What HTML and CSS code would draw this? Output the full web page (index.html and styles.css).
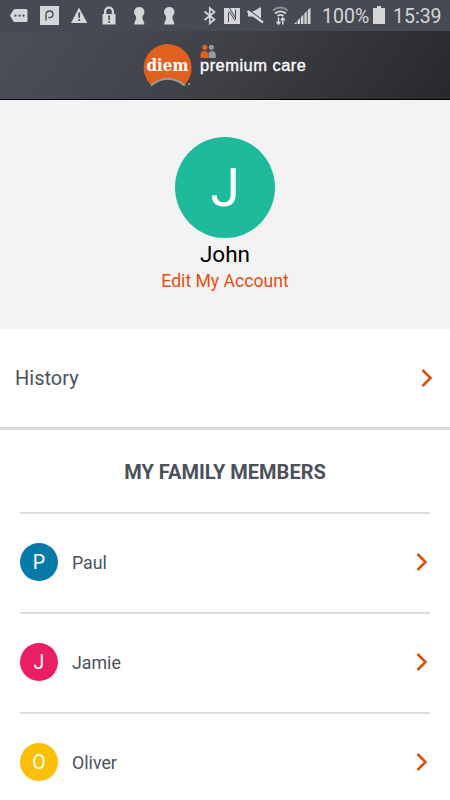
FILE: index.html
```html
<!DOCTYPE html>
<html lang="en">
<head>
<meta charset="utf-8">
<title>diem premium care</title>
<link rel="stylesheet" href="styles.css">
</head>
<body>
<div class="status">
  <svg class="status-icons" width="320" height="31" viewBox="0 0 320 31">
    <g fill="#d5d6d8">
      <path d="M15 9h11q1.500 0 1.500 1.500v10q0 1.500-1.500 1.500H15q-1 0-2-1.300l-3-5.200 3-5q.9-1.500 2-1.500z"/>
      <path d="M40 6h19v19H40z"/>
      <path d="M79 7.500 87.200 23H71z"/>
      <path d="M103 14h1v-2.500a5 5 0 0 1 10 0V14h1.500v10.500H102.500V14zm3.300 0h5.400v-2.500a2.700 2.700 0 0 0-5.400 0z"/>
      <path id="keyhole" d="M139.500 7a5 5 0 0 1 3.400 8.600l-.6 2.400 2 5.200v1.300h-10v-1.300l2-5.200-.7-2.400A5 5 0 0 1 139.500 7z"/>
      <use href="#keyhole" x="30"/>
      <path d="M224 8h16v16h-16z"/>
      <path d="M248 11.500h5l8-4.500v14.500l-8-5h-5z"/>
      <path d="m294 24 2.600-2.600V24zm3.500 0v-3.500l2.600-2.600V24zm3.500 0v-7l2.400-2.500V24zm3.400 0v-10.500l2.300-2.300V24zm3.300 0V10.200L310.500 7.500V24z"/>
    </g>
    <g fill="#464a52"><circle cx="15.500" cy="15.700" r="1.100"/><circle cx="19.500" cy="15.700" r="1.100"/><circle cx="23.500" cy="15.700" r="1.100"/><path d="M78.200 12.500h2l-.3 5.500h-1.400zm.1 6.700h1.800V21h-1.800zM108.200 15.500h1.800l-.2 4.500h-1.400zm0 5.500h1.700v1.700h-1.700z"/></g>
    <path d="M46 20.500v-6q0-3.500 4-3.500 3 0 3 3.200t-3.500 3.300h-1" fill="none" stroke="#464a52" stroke-width="1.300"/>
    <path d="M228.500 22V12.500M229 11l6 9.500M229.500 8l6 10M235.500 19.500V9.500" fill="none" stroke="#464a52" stroke-width="1"/>
    <path d="m248 9.500 15 11" stroke="#464a52" stroke-width="1.200"/>
    <g fill="none" stroke="#d5d6d8">
      <path d="m204.500 11.500 10 8-4.700 4V8l4.700 4-10 8" stroke-width="1.700"/>
      <path d="m247.500 11 15.500 11.500" stroke-width="2.200"/>
      <path d="M272.800 10.500q7.700-6 15.400 0" stroke-width="1.800" stroke="#8b8f94"/>
      <path d="M275 13.400q5.500-4 11 0M277.500 16q3-2.200 6 0" stroke-width="1.800"/>
      <path d="M278.500 17.500V24m-2-2.300 2 2.300 2-2.300M282.800 24.500V18m-2 2.300 2-2.300 2 2.300" stroke-width="1.500"/>
    </g>
  </svg>
  <span class="percent">100%</span>
  <svg class="battery" width="12" height="18" viewBox="0 0 12 18"><path d="M4 0h4v2h4v16H0V2h4z" fill="#d5d6d8"/></svg>
  <span class="time">15:39</span>
</div>
<header class="brand">
  <svg width="166" height="50" viewBox="142 42 166 50">
    <path d="M151.500 85.500a24 23.800 0 1 1 32.300 0Q167.600 72.500 151.500 85.500z" fill="#df601f"/>
    <path d="M151 85.500Q167.500 72 185 85.500" fill="none" stroke="#9b9c9d" stroke-width="2"/>
    <circle cx="189" cy="84" r="1" fill="#b0b1b3"/>
    <text class="logo-name" x="146.500" y="71" textLength="42" lengthAdjust="spacingAndGlyphs">diem</text>
    <g fill="#df601f"><circle cx="204.800" cy="47.300" r="2.600"/><path d="M200.500 58v-3q0-4 4-4 3.500 0 3.500 3.500V58z"/></g>
    <g fill="#96999b"><circle cx="211.400" cy="47.300" r="2.600"/><path d="M208.500 58v-5q1-2 3.300-2 4 0 4 4v3z"/></g>
    <text class="logo-product" x="200" y="71" textLength="106.500" lengthAdjust="spacingAndGlyphs">premium care</text>
  </svg>
</header>
<section class="profile">
  <div class="avatar avatar-large">J</div>
  <div class="profile-name">John</div>
  <a class="edit">Edit My Account</a>
</section>
<div class="history">
  <span>History</span>
  <svg class="chevron" width="12" height="18" viewBox="0 0 12 18"><path d="m1.500 1 8 8-8 8"/></svg>
</div>
<section class="family">
  <h2>MY FAMILY MEMBERS</h2>
  <div class="member"><div class="avatar blue">P</div><span>Paul</span><svg class="chevron" width="12" height="18" viewBox="0 0 12 18"><path d="m1.500 1 8 8-8 8"/></svg></div>
  <div class="member"><div class="avatar pink">J</div><span>Jamie</span><svg class="chevron" width="12" height="18" viewBox="0 0 12 18"><path d="m1.500 1 8 8-8 8"/></svg></div>
  <div class="member"><div class="avatar yellow">O</div><span>Oliver</span><svg class="chevron" width="12" height="18" viewBox="0 0 12 18"><path d="m1.500 1 8 8-8 8"/></svg></div>
</section>
</body>
</html>
```
FILE: styles.css
```css
* { box-sizing: border-box; }
body { margin: 0; height: 800px; overflow: hidden; background: #fff; color: #4b515a; font-family: Roboto, sans-serif; }
.status { display: flex; height: 31px; background: #464a52; color: #d5d6d8; font-size: 19.5px; line-height: 34px; white-space: nowrap; }
.status-icons { flex: none; }
.percent { width: 53px; padding-left: 2px; }
.battery { flex: none; margin-top: 6px; }
.time { margin-left: 8px; }
.brand { display: flex; justify-content: center; height: 69px; padding-top: 11px; background: linear-gradient(125deg, #4b5057, #3e4046 50%, #28282c); border-bottom: 1px solid #000; }
.logo-name { font: bold 17px "DejaVu Serif", serif; fill: #fff; }
.logo-product { font: 500 16px "Liberation Sans", sans-serif; letter-spacing: .5px; fill: #fff; stroke: #fff; stroke-width: .35; }
.profile { display: flex; flex-direction: column; align-items: center; height: 229px; padding-top: 37px; background: #f3f3f3; }
.avatar { display: flex; align-items: center; justify-content: center; flex: none; width: 38px; height: 38px; border-radius: 50%; color: #fff; font-size: 19.5px; }
.avatar-large { width: 100px; height: 101px; background: #1dbb9b; font-size: 53px; }
.profile-name { margin-top: 3px; color: #000; font-size: 22.5px; line-height: 26px; }
.edit { margin-top: 3px; color: #e54e12; font-size: 17.6px; line-height: 22px; }
.history { display: flex; align-items: center; justify-content: space-between; height: 101px; padding: 0 17px 1px 15px; border-bottom: 3px solid #d9d9d9; font-size: 20px; }
.chevron { flex: none; fill: none; stroke: #df4d0b; stroke-width: 2.5; }
.family { padding: 0 20px; }
h2 { margin: 0; height: 82px; font-size: 20px; font-weight: 700; line-height: 84px; text-align: center; }
.member { display: flex; align-items: center; height: 100px; padding: 0 2px 2px 0; border-top: 2px solid #dedede; font-size: 17.8px; }
.member span { flex: 1; margin-left: 14px; }
.blue { background: #087aaa; }
.pink { background: #e91e63; }
.yellow { background: #fcbf08; }
```
